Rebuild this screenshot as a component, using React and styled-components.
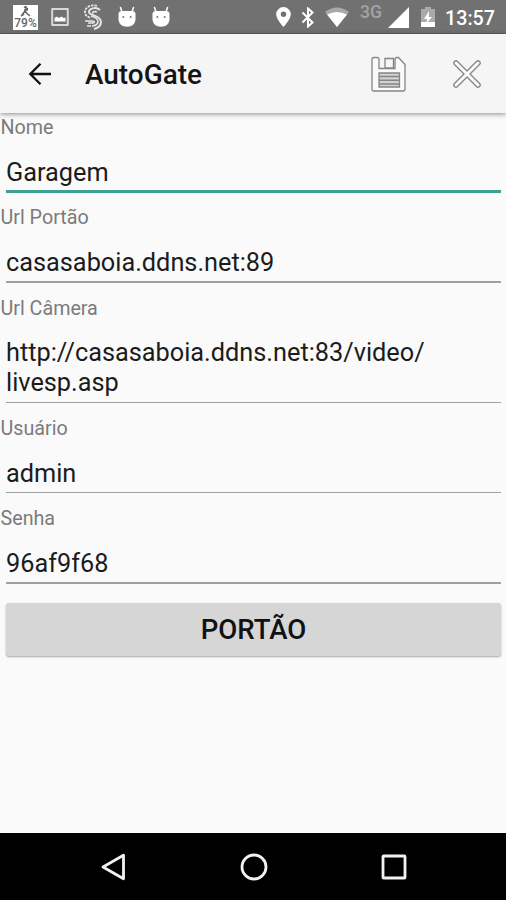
import styled, { createGlobalStyle } from "styled-components";

const GlobalStyle = createGlobalStyle`
  * {
    box-sizing: border-box;
  }
  body {
    margin: 0;
    background: #fafafa;
    font-family: Roboto, "Noto Sans", sans-serif;
  }
`;

const Screen = styled.div`
  display: flex;
  flex-direction: column;
  width: 506px;
  height: 900px;
  overflow: hidden;
  background: #fafafa;
  color: #1c1c1c;
`;

const StatusBar = styled.header`
  display: flex;
  align-items: center;
  flex: none;
  height: 34px;
  padding: 1px 11px 0 13px;
  background: #717171;
  border-bottom: 1px solid #616161;
  color: #fff;
`;

const StatusIcon = styled.svg`
  flex: none;
  width: ${(props) => props.$w}px;
  height: ${(props) => props.$h}px;
  margin-left: ${(props) => props.$gap || 0}px;
`;

const BatteryBadge = styled.div`
  flex: none;
  width: 25px;
  height: 25px;
  margin-top: 1px;
  background: #fff;
  color: #666;
  text-align: center;
  font-size: 12px;
  font-weight: 500;
  line-height: 12px;

  svg {
    display: block;
    margin: 0 auto;
  }
`;

const Network = styled.span`
  margin: -10px 0 0 11px;
  color: #a3a3a3;
  font-size: 17.5px;
  font-weight: 500;
  line-height: 20px;
`;

const Clock = styled.span`
  margin: 3px 0 0 auto;
  font-size: 19.7px;
  font-weight: 500;
  line-height: 24px;
`;

const AppBar = styled.div`
  display: flex;
  align-items: center;
  flex: none;
  height: 79px;
  padding: 0 24px 0 26px;
  background: #f5f5f5;
  box-shadow: 0 1px 5px rgba(0, 0, 0, 0.45);
  z-index: 1;
`;

const Title = styled.h1`
  flex: 1;
  margin: 3px 0 0 32px;
  color: #141414;
  font-size: 27.9px;
  font-weight: 500;
  line-height: 32px;
`;

const IconButton = styled.button`
  display: flex;
  padding: 0;
  margin-left: ${(props) => props.$gap || 0}px;
  border: 0;
  background: none;
`;

const Form = styled.main`
  flex: 1;
  padding-top: 3px;
`;

const Label = styled.div`
  height: 24px;
  padding-left: 0.5px;
  color: #7b7b7b;
  font-size: 19.7px;
  line-height: 24px;
`;

const Value = styled.div`
  padding: 17.8px 6px 0;
  font-size: 25.3px;
  line-height: 30px;
  white-space: pre-line;
`;

const RuleBox = styled.div`
  height: 18.5px;
  padding: ${(props) => (props.$focused ? 2.7 : 3.3)}px 5px 0 6px;
`;

const Rule = styled.div`
  height: ${(props) => (props.$focused ? 3 : 1.4)}px;
  background: ${(props) => (props.$focused ? "#3f9f91" : "#a0a0a0")};
`;

const GateButton = styled.button`
  display: block;
  width: 495px;
  height: 53px;
  margin: 5.3px 5px 0 6px;
  padding: 0;
  border: 0;
  border-radius: 3px;
  background: #d6d6d6;
  box-shadow: 0 1px 2px rgba(0, 0, 0, 0.35);
  color: #111;
  font: 500 27.6px/53px Roboto, sans-serif;
`;

const NavBar = styled.nav`
  display: flex;
  align-items: center;
  justify-content: space-between;
  flex: none;
  height: 67px;
  padding: 0 98px 0 100px;
  background: #000;
`;

const fields = [
  { label: "Nome", value: "Garagem", focused: true },
  { label: "Url Portão", value: "casasaboia.ddns.net:89" },
  { label: "Url Câmera", value: "http://casasaboia.ddns.net:83/video/\nlivesp.asp" },
  { label: "Usuário", value: "admin" },
  { label: "Senha", value: "96af9f68" },
];

const PictureIcon = () => (
  <StatusIcon $w={18} $h={18} $gap={13} viewBox="0 0 18 18">
    <path
      d="M1.200 1h15.600v16H1.200z"
      fill="none"
      stroke="#d8d8d8"
      strokeWidth="2"
      strokeLinejoin="round"
    />
    <path d="M3.500 13.500V10l2.500-1.500 2 1.500 2.500-1.500 2 1.500 2-.5v4z" fill="#fff" />
  </StatusIcon>
);

const SwirlIcon = () => (
  <StatusIcon $w={20} $h={26} $gap={14} viewBox="0 0 20 26" fill="none" stroke="#e6e6e6">
    <path d="M14 2C8 0 2 3 2 8c0 4 3 5 6 6" strokeWidth="1.800" strokeDasharray="2.500 1" />
    <path d="M17 6C12 2 6 5 6 8c0 4 12 3 12 10 0 4-3 6-7 7" strokeWidth="2" />
    <path d="M14 8c-3-1-5 0-4 1.500M8 12c4 1 7 3 7 6 0 2-3 4-6 4" strokeWidth="1.600" />
    <path d="M2 17h7c3 0 3 2 0 2H5M4 22h4" strokeWidth="1.600" />
  </StatusIcon>
);

const DroidIcon = ({ gap }) => (
  <StatusIcon $w={18} $h={22} $gap={gap} viewBox="0 0 18 22">
    <path d="M2.500 1.500L4 6M15.500 1.500L14 6" stroke="#fff" strokeWidth="1.500" strokeLinecap="round" />
    <path d="M.5 7.500Q.8 5 3.500 5h11q2.700 0 3 2.500V14q-1 6.800-8.500 6.800T.5 14z" fill="#fff" />
    <circle cx="5.300" cy="11" r="1" fill="#777" />
    <circle cx="12.700" cy="11" r="1" fill="#777" />
  </StatusIcon>
);

const SaveIcon = () => (
  <svg width="36" height="36" viewBox="0 0 36 36" fill="none" stroke="#858585" strokeWidth="1.300">
    <path
      d="M3 1.500h3q2 0 2 2v9h16v-9q0-2 2-2h1.500l6.500 7V33q0 2-2 2H3q-2 0-2-2V3.500q0-2 2-2z"
      fill="#fafafa"
    />
    <path d="M14 2.500h8.500v9.500H14z" fill="#f5f5f5" />
    <path d="M8 17h20.500v14H8z" fill="#d2d2d2" />
    <path d="M8 20.500h20M8 24.300h20M8 28h20" strokeWidth="1.500" />
  </svg>
);

function App() {
  return (
    <>
      <GlobalStyle />
      <Screen>
        <StatusBar>
          <BatteryBadge>
            <svg width="14" height="12" viewBox="0 0 14 12" fill="none" stroke="#666">
              <path d="M7 1v4M5 2l4 2M5 5h4M3 10l3-4 2 2.500 3 2.500M2 11l3-2" strokeWidth="1.600" />
            </svg>
            79%
          </BatteryBadge>
          <PictureIcon />
          <SwirlIcon />
          <DroidIcon gap={15} />
          <DroidIcon gap={16} />
          {/* gps, bluetooth, wifi */}
          <StatusIcon $w={15} $h={20} $gap={106} viewBox="0 0 15 20">
            <path
              d="M7.500 0A7.300 7.300 0 0 0 .2 7.300C.2 12.500 7.500 20 7.500 20s7.300-7.500 7.300-12.700A7.300 7.300 0 0 0 7.500 0zm0 10a2.700 2.700 0 1 1 0-5.400 2.700 2.700 0 0 1 0 5.400z"
              fill="#fff"
            />
          </StatusIcon>
          <StatusIcon $w={14} $h={21} $gap={10} viewBox="0 0 14 21">
            <path
              d="M1.500 5.500l10 10L7 19.500v-18l4.500 4-10 10"
              fill="none"
              stroke="#fff"
              strokeWidth="2"
            />
          </StatusIcon>
          <StatusIcon $w={24} $h={20} $gap={10} viewBox="0 0 24 20">
            <path d="M0 5Q12-4 24 5L12 20z" fill="#a8a8a8" />
            <path d="M2 7.500Q12 2.500 22 7.500L12 20z" fill="#fff" />
          </StatusIcon>
          <Network>3G</Network>
          <StatusIcon $w={21} $h={21} $gap={6} viewBox="0 0 21 21">
            <path d="M21 0v21H0z" fill="#fff" />
          </StatusIcon>
          <StatusIcon $w={14} $h={20} $gap={12} viewBox="0 0 14 20">
            <path d="M4 0h6v2h4v18H0V2h4z" fill="#aaa" />
            <path d="M0 15h14v5H0z" fill="#fff" />
            <path d="M8 4l-5 8h3.300L5 17l6-7H7.800z" fill="#fff" />
          </StatusIcon>
          <Clock>13:57</Clock>
        </StatusBar>

        <AppBar>
          <IconButton aria-label="Voltar">
            <svg width="27" height="24" viewBox="0 0 27 24" fill="none" stroke="#111" strokeWidth="2.300">
              <path d="M25 12H4.500M14.500 1.800L4.300 12l10.200 10.200" />
            </svg>
          </IconButton>
          <Title>AutoGate</Title>
          <IconButton aria-label="Salvar">
            <SaveIcon />
          </IconButton>
          <IconButton $gap={45} aria-label="Excluir">
            <svg width="30" height="30" viewBox="0 0 30 30" fill="none" strokeLinecap="round">
              <path d="M4 4l22 22M26 4L4 26" stroke="#858585" strokeWidth="5.600" />
              <path d="M4 4l22 22M26 4L4 26" stroke="#fafafa" strokeWidth="3" />
            </svg>
          </IconButton>
        </AppBar>

        <Form>
          {fields.map((field) => (
            <div key={field.label}>
              <Label>{field.label}</Label>
              <Value>{field.value}</Value>
              <RuleBox $focused={field.focused}>
                <Rule $focused={field.focused} />
              </RuleBox>
            </div>
          ))}
          <GateButton>PORTÃO</GateButton>
        </Form>

        <NavBar>
          <svg width="27" height="30" viewBox="0 0 27 30" fill="none" stroke="#f2f2f2" strokeWidth="2.800">
            <path d="M23.500 3.200v23.600L3 15z" strokeLinejoin="round" />
          </svg>
          <svg width="28" height="28" viewBox="0 0 28 28" fill="none" stroke="#f2f2f2" strokeWidth="2.800">
            <circle cx="14" cy="14" r="12" />
          </svg>
          <svg width="28" height="28" viewBox="0 0 28 28" fill="none" stroke="#f2f2f2" strokeWidth="2.800">
            <rect x="3" y="3" width="22" height="22" rx="0.800" />
          </svg>
        </NavBar>
      </Screen>
    </>
  );
}

export default App;
